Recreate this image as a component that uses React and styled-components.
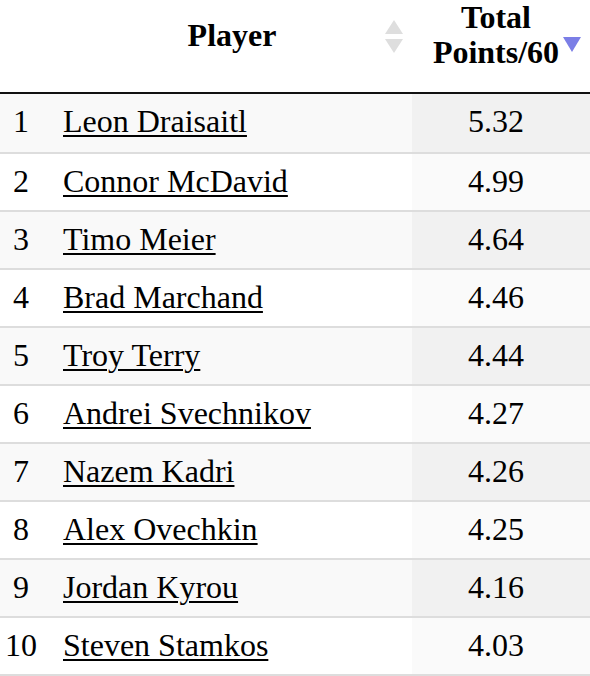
import React from 'react';
import styled, { createGlobalStyle } from 'styled-components';

const GlobalStyle = createGlobalStyle`
  html, body {
    margin: 0;
    padding: 0;
    background: #ffffff;
  }
`;

const Table = styled.table`
  width: 590px;
  table-layout: fixed;
  border-collapse: separate;
  border-spacing: 0;
  font-family: "Liberation Serif", "Times New Roman", serif;
  font-size: 32px;
  line-height: 36px;
  color: #000;
`;

const HeadCell = styled.th`
  position: relative;
  padding: 0 ${p => p.$padRight || 0}px 22px ${p => p.$padLeft || 0}px;
  text-align: center;
  vertical-align: middle;
  font-weight: bold;
  line-height: 35px;
  border-bottom: 2px solid #111;
  background: #fff;
`;

// grey up/down pair for an unsorted column, blue arrow for the sorted one
const SortIcon = styled.svg`
  position: absolute;
  left: ${p => p.$left}px;
  top: ${p => p.$top}px;
`;

const Row = styled.tr`
  background: ${p => (p.$odd ? '#f9f9f9' : '#ffffff')};

  &:first-child td {
    padding-bottom: 13px;
  }
`;

const Cell = styled.td`
  padding: 9px 0 11px;
  border-bottom: 2px solid #ddd;
  white-space: nowrap;
`;

const RankCell = styled(Cell)`
  text-align: center;
`;

const NameCell = styled(Cell)`
  padding-left: 21px;
`;

const PointsCell = styled(Cell)`
  padding-left: 12px;
  padding-right: 22px;
  text-align: center;
  background: ${p => (p.$odd ? '#f1f1f1' : '#fafafa')};
`;

const PlayerLink = styled.a`
  color: #000;
  text-decoration: underline;
  text-decoration-thickness: 2px;
  text-underline-offset: 3px;
  cursor: pointer;
`;

const players = [
  ['Leon Draisaitl', '5.32'],
  ['Connor McDavid', '4.99'],
  ['Timo Meier', '4.64'],
  ['Brad Marchand', '4.46'],
  ['Troy Terry', '4.44'],
  ['Andrei Svechnikov', '4.27'],
  ['Nazem Kadri', '4.26'],
  ['Alex Ovechkin', '4.25'],
  ['Jordan Kyrou', '4.16'],
  ['Steven Stamkos', '4.03'],
];

export default function App() {
  return (
    <>
      <GlobalStyle />
      <Table>
        <colgroup>
          <col style={{ width: 42 }} />
          <col style={{ width: 370 }} />
          <col style={{ width: 178 }} />
        </colgroup>
        <thead>
          <tr>
            <HeadCell />
            <HeadCell $padLeft={21} $padRight={11}>
              Player
              <SortIcon $left={342} $top={20} width="20" height="34" viewBox="0 0 20 34">
                <polygon points="10,0 19,14 1,14" fill="#dedede" />
                <polygon points="1,19 19,19 10,33" fill="#dedede" />
              </SortIcon>
            </HeadCell>
            <HeadCell $padLeft={12} $padRight={22}>
              Total Points/60
              <SortIcon $left={151} $top={37} width="18" height="16" viewBox="0 0 18 16">
                <polygon points="0,0 18,0 9,15" fill="#7b7ee6" />
              </SortIcon>
            </HeadCell>
          </tr>
        </thead>
        <tbody>
          {players.map(([name, pts], i) => (
            <Row key={name} $odd={i % 2 === 0}>
              <RankCell>{i + 1}</RankCell>
              <NameCell>
                <PlayerLink href="#">{name}</PlayerLink>
              </NameCell>
              <PointsCell $odd={i % 2 === 0}>{pts}</PointsCell>
            </Row>
          ))}
        </tbody>
      </Table>
    </>
  );
}
